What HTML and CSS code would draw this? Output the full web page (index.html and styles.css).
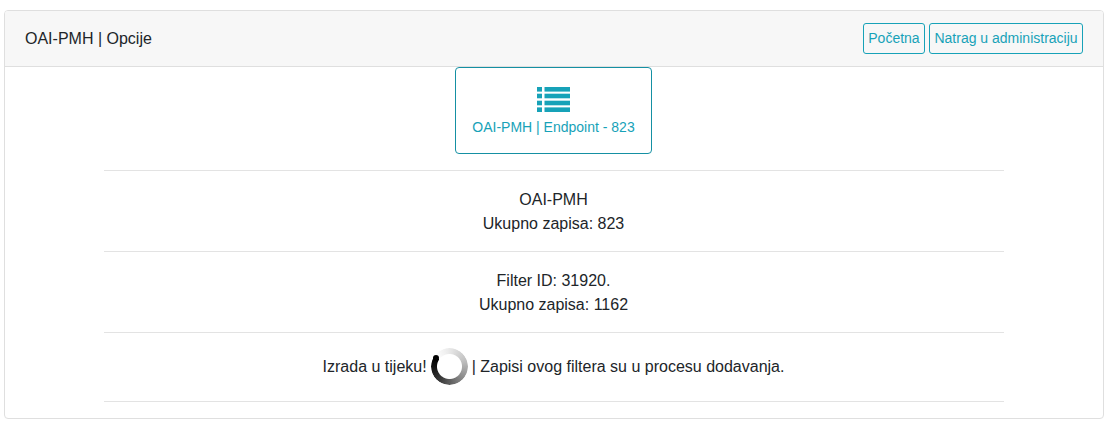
FILE: index.html
```html
<!DOCTYPE html>
<html lang="en">
<head>
    <meta charset="UTF-8">
    <meta name="viewport" content="width=device-width, initial-scale=1.0">
    <title>OAI-PMH | Opcije</title>
    <link rel="stylesheet" href="styles.css">
</head>
<body>
    <div class="card">
        <div class="card-header">
            <span class="card-title">OAI-PMH | Opcije</span>
            <div class="header-actions">
                <a href="#" class="btn">Početna</a>
                <a href="#" class="btn">Natrag u administraciju</a>
            </div>
        </div>
        <div class="card-body">
            <a href="#" class="tile">
                <svg class="tile-icon" width="33" height="25" viewBox="0 0 33 25">
                    <rect x="0" y="0" width="5" height="4.6"/>
                    <rect x="7.5" y="0" width="25.5" height="4.6"/>
                    <rect x="0" y="6.7" width="5" height="4.6"/>
                    <rect x="7.5" y="6.7" width="25.5" height="4.6"/>
                    <rect x="0" y="13.7" width="5" height="4.6"/>
                    <rect x="7.5" y="13.7" width="25.5" height="4.6"/>
                    <rect x="0" y="20.4" width="5" height="4.6"/>
                    <rect x="7.5" y="20.4" width="25.5" height="4.6"/>
                </svg>
                <span>OAI-PMH | Endpoint - 823</span>
            </a>
            <hr class="divider first">
            <p class="info">OAI-PMH<br>Ukupno zapisa: 823</p>
            <hr class="divider">
            <p class="info">Filter ID: 31920.<br>Ukupno zapisa: 1162</p>
            <hr class="divider">
            <p class="info status">
                <span>Izrada u tijeku!</span>
                <span class="spinner"><span class="spinner-ring"></span><span class="spinner-cap"></span></span>
                <span>| Zapisi ovog filtera su u procesu dodavanja.</span>
            </p>
            <hr class="divider">
        </div>
    </div>
</body>
</html>
```

FILE: styles.css
```css
* {
    margin: 0;
    padding: 0;
    box-sizing: border-box;
}

body {
    font-family: "Liberation Sans", Arial, sans-serif;
    font-size: 16px;
    line-height: 24px;
    color: #212529;
    background: #fff;
    padding: 10px 6px 5px 4px;
}

.card {
    border: 1px solid #dfdfdf;
    border-radius: 4px;
    height: 409px;
    overflow: hidden;
}

.card-header {
    display: flex;
    justify-content: space-between;
    align-items: center;
    height: 56px;
    padding: 0 20px;
    background: #f7f7f7;
    border-bottom: 1px solid #dfdfdf;
}

.header-actions {
    display: flex;
    gap: 4px;
}

.btn {
    display: block;
    height: 31px;
    padding: 3px 4.4px;
    font-size: 14px;
    line-height: 23px;
    color: #17a2b8;
    text-decoration: none;
    border: 1px solid #17a2b8;
    border-radius: 3px;
}

.card-body {
    display: flex;
    flex-direction: column;
    align-items: center;
    padding-right: 1px;
}

.tile {
    display: flex;
    flex-direction: column;
    align-items: center;
    width: 197px;
    height: 87px;
    padding-top: 19px;
    font-size: 14px;
    line-height: 21px;
    color: #17a2b8;
    text-decoration: none;
    border: 1px solid #1590a3;
    border-radius: 4px;
}

.tile-icon {
    fill: #17a2b8;
    margin-bottom: 5px;
}

.divider {
    width: 900px;
    border: 0;
    border-top: 1px solid #e3e3e3;
}

.divider.first {
    margin-top: 16px;
}

.info {
    text-align: center;
    padding: 17px 0 15px;
}

.status {
    display: flex;
    justify-content: center;
    align-items: center;
    gap: 4px;
    padding: 15px 0 16px;
}

.spinner {
    display: block;
    position: relative;
    width: 37px;
    height: 37px;
}

.spinner-ring {
    display: block;
    width: 100%;
    height: 100%;
    border-radius: 50%;
    background: conic-gradient(from 303deg, #fff 0deg, #ececec 50deg, #c4c4c4 120deg, #8a8a8a 190deg, #3c3c3c 270deg, #0d0d0d 330deg, #000 360deg);
    -webkit-mask: radial-gradient(circle, transparent 12px, #000 13px);
    mask: radial-gradient(circle, transparent 12px, #000 13px);
}

.spinner-cap {
    position: absolute;
    left: 2px;
    top: 7px;
    width: 6px;
    height: 6px;
    border-radius: 50%;
    background: #000;
}
```
